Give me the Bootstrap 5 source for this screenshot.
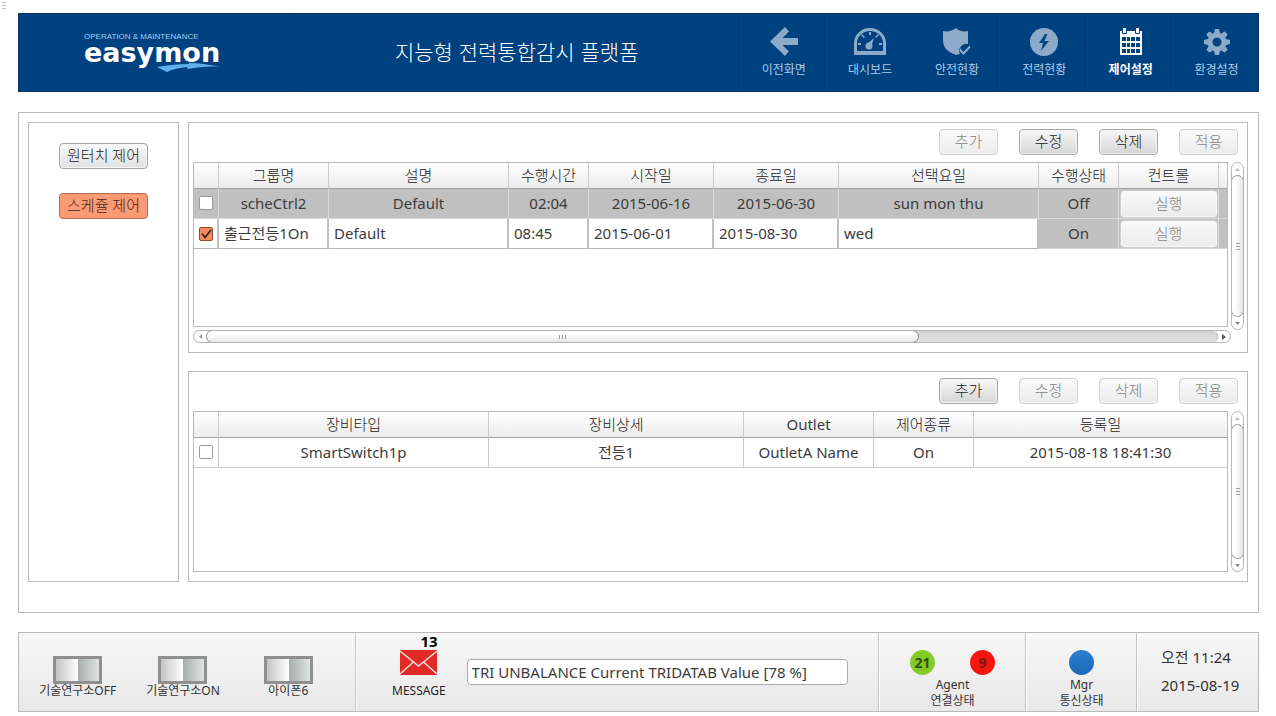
<!DOCTYPE html>
<html lang="ko">
<head>
<meta charset="utf-8">
<meta name="viewport" content="width=device-width, initial-scale=1">
<title>easymon</title>
<link href="https://cdn.jsdelivr.net/npm/bootstrap@5.3.0/dist/css/bootstrap.min.css" rel="stylesheet">
<style>
  :root { --line: #b9b9b9; --ink: #3c3c3c; --navy: #00417f; }
  body { font-family: "Noto Sans", "Noto Sans CJK KR", sans-serif; font-size: 15px; line-height: 20px; color: var(--ink); background: #fff; padding: 13px 17px 4px 18px; position: relative; }
  .grip { left: 2px; top: 2px; width: 4px; height: 7px; background: repeating-linear-gradient(#bbb 0 1px, #fff 1px 3px); }
  .bd { border: 1px solid var(--line); }

  /* header */
  .topbar { display: grid; grid-template-columns: 275fr 446fr 86fr 87fr 87fr 88fr 85fr 87fr; background: var(--navy); min-height: 79px; color: #fff; border: 1px solid #0b3563; }
  .topbar > * + * { border-left: 1px solid #063b75; }
  .topbar > .menu-item { box-shadow: inset 1px 0 #064686; }
  .brand-box { padding: 18px 0 0 65px; }
  .brand-over { font-size: 8px; line-height: 10px; color: #9fd0f5; font-family: "Liberation Sans", sans-serif; }
  .brand-name { font: bold 27px/22px "DejaVu Sans", sans-serif; }
  .brand-swoosh { left: 138px; top: 49px; }
  .page-title { font-size: 21px; line-height: 28px; padding-bottom: 4px; font-weight: 300; font-family: "Noto Sans CJK KR", sans-serif; }
  .menu-item { color: #a9cbea; text-decoration: none; font-size: 12px; line-height: 16px; padding: 12px 0 0 3px; font-family: "Noto Sans CJK KR", sans-serif; }
  .menu-item svg { margin-bottom: 3px; fill: #8eaac9; }
  .menu-item.active { color: #fff; font-weight: 700; }
  .menu-item.active svg { fill: #fff; }

  /* panels */
  .stage { margin-top: 20px; padding: 9px 10px 30px 9px; gap: 9px; min-height: 501px; }
  .side { flex: 0 0 151px; padding-top: 20px; gap: 24px; }
  .pane { padding: 6px 3px 9px 4px; }
  .tools { gap: 21px; padding-right: 6px; margin-bottom: 7px; }
  .btn-ui { height: 26px; min-width: 59px; padding: 0 6px 2px; font-size: 15px; font-weight: 300; line-height: 22px; color: #222; border: 1px solid #a6a6a6; border-radius: 4px; background: linear-gradient(#f7f7f7, #d6d6d6); box-shadow: inset 0 0 0 1px #f6f6f6; }
  .btn-ui:disabled { color: #858585; border-color: #cfcfcf; background: linear-gradient(#fafafa, #ebebeb); opacity: 1; }
  .btn-side { width: 89px; background: linear-gradient(#fafafa, #e0e0e0); }
  .btn-side.active { background: #fd9a76; border-color: #b56d52; box-shadow: none; color: #40251b; }

  .frame { border: 1px solid var(--line); }
  .frame-a { height: 165px; }
  .frame-b { height: 161px; }
  .grid-table { table-layout: fixed; width: 100%; margin: 0; border-collapse: separate; border-spacing: 0; text-align: center; }
  .grid-table th { font-weight: 300; color: #222; height: 26px; padding: 0 0 2px; border-right: 1px solid #cdcdcd; border-bottom: 1px solid #a5a5a5; background: linear-gradient(#fff, #ececec); white-space: nowrap; }
  .grid-table th.latin { font-weight: 400; color: var(--ink); }
  .grid-table td { height: 30px; padding: 0 0 2px; border-right: 1px solid #cdcdcd; border-bottom: 1px solid #cdcdcd; white-space: nowrap; line-height: 20px; vertical-align: middle; }
  .grid-table tr > :last-child { border-right: 0; }
  .grid-table .dim { background: #c0c0c0; border-color: #d9d9d9; }
  .grid-table .ctl, .grid-table .edit { padding: 0; }
  .grid-table .edit { border-right: 2px solid #c0c0c0; border-bottom-color: #b5b5b5; }
  .cell-input { display: block; width: 100%; height: 28px; border: 0; border-radius: 0; padding: 0 5px 2px; font-size: 15px; color: var(--ink); background: #fff; }
  .tick { appearance: none; display: block; margin: 0 auto; width: 14px; height: 14px; border: 1px solid #9b9b9b; border-radius: 2px; background: #fff; }
  .tick:checked { border-color: #8d4b31; background: #f88a5f url("data:image/svg+xml,%3Csvg xmlns='http://www.w3.org/2000/svg' viewBox='0 0 12 12'%3E%3Cpath d='M2 5.5 5 9.5 11 2' fill='none' stroke='%23402a20' stroke-width='1.8'/%3E%3C/svg%3E") center / 12px no-repeat; }
  .btn-run { display: block; width: 98px; max-width: 100%; height: 28px; margin: 0 auto; }

  /* scrollbars */
  .vbar, .hbar { background: #fff; border: 1px solid #b4b4b4; border-radius: 7px; overflow: hidden; color: #888; }
  .vbar { flex: 0 0 13px; margin-left: 3px; }
  .vbar-long { margin-bottom: -3px; }
  .hbar { height: 13px; margin: 3px 13px 0 0; }
  .vbar .thumb { flex: 1; margin: 0 -1px; border: 1px solid #999; border-radius: 7px; background: linear-gradient(90deg, #fff 30%, #e6e6e6); }
  .hbar .thumb { flex: 7 1 0; margin: -1px 0; border: 1px solid #8d8d8d; border-radius: 7px; background: linear-gradient(#fff 30%, #e6e6e6); z-index: 1; }
  .hbar .rest { flex: 3 1 0; background: linear-gradient(#d2d2d2, #e3e3e3); margin-left: -6px; border-right: 1px solid #b4b4b4; border-radius: 0 6px 6px 0; }
  .cap { flex: 0 0 12px; }
  .grains-v { width: 4px; height: 7px; background: repeating-linear-gradient(#999 0 1px, transparent 1px 3px); }
  .grains-h { width: 7px; height: 4px; background: repeating-linear-gradient(90deg, #999 0 1px, transparent 1px 3px); }

  /* status bar */
  .statusbar { display: grid; grid-template-columns: 336fr 523fr 147fr 111fr 122fr; margin-top: 19px; min-height: 80px; background: linear-gradient(#f7f7f7, #e8e8e8); font-size: 12px; line-height: 16px; color: #333; }
  .statusbar > * + * { border-left: 1px solid #c3c3c3; box-shadow: inset 1px 0 #fff; }
  .switches { padding: 23px 14px 0 6px; }
  .switch-btn { border: 0; background: none; padding: 0; font-size: 12px; line-height: 14px; color: #333; }
  .knob { display: block; width: 49px; height: 28px; margin: 0 auto; border: solid #8f8f8f; border-width: 3px; background: linear-gradient(90deg, #c4c4c4, #fff 51%, #a9afae 52%, #dfe4e2); }
  .msg { padding: 0 30px 0 36px; }
  .msg-label { color: #222; }
  .msg-count { right: 8px; top: 0; font: bold 15px/17px "Noto Sans", sans-serif; color: #000; }
  .msg-icon { margin-top: 17px; }
  .msg-field { height: 26px; margin: 0 0 1px 21px; padding: 0 4px; font-size: 15px; line-height: 20px; color: var(--ink); border: 1px solid #aaa; border-radius: 4px; }
  .lamp { width: 25px; height: 25px; border-radius: 50%; font-size: 14px; font-weight: 700; line-height: 25px; text-align: center; }
  .lamp-on { background: radial-gradient(#7cc51d, #8cd02f); color: #2f5011; }
  .lamp-off { background: #f5160f; color: #7d1a12; }
  .lamp-mgr { background: linear-gradient(#2a80cf, #1b69b8); }
  .status-cell { padding: 17px 0 0 1px; }
  .lamps { gap: 35px; margin-bottom: 2px; }
  .clock { padding: 0 0 2px 24px; font-size: 15px; gap: 8px; line-height: 20px; }
</style>
</head>
<body>
<div class="grip position-absolute"></div>

<header class="topbar">
  <div class="brand-box position-relative">
    <div class="brand-over">OPERATION &amp; MAINTENANCE</div>
    <div class="brand-name">easymon</div>
    <svg class="brand-swoosh position-absolute" width="64" height="9" viewBox="0 0 64 9"><path fill="#5fb2ee" d="M0 4C12 2 22 1 32 1l0-1C42 0 54 2 64 4 52 3 42 4 31 6l-1-2C22 5 16 6 10 9Z"/></svg>
  </div>
  <h1 class="page-title m-0 d-flex align-items-center justify-content-center">지능형 전력통합감시 플랫폼</h1>
  <a class="menu-item d-flex flex-column align-items-center" href="#"><svg width="34" height="32" viewBox="0 0 34 32"><path d="M18 1 3 15.500 18 30l4-4.500-6.500-6.500H31v-7H15.500L22 5.500Z"/></svg>이전화면</a>
  <a class="menu-item d-flex flex-column align-items-center" href="#"><svg width="34" height="32" viewBox="0 0 34 32"><path fill-rule="evenodd" d="M1 29V17a16 15 0 0 1 32 0v12ZM4 25h26v-8a13 12 0 0 0-26 0Z"/><circle cx="16" cy="20" r="3.500"/><path d="m14 18 7-6-2.500 8ZM16 6h2v3h-2ZM5 17h3v2H5ZM26 17h3v2h-3ZM9 8l3 3-1 1-3-3ZM25 8l-3 3 1 1 3-3Z"/></svg>대시보드</a>
  <a class="menu-item d-flex flex-column align-items-center" href="#"><svg width="34" height="32" viewBox="0 0 34 32"><path d="M16 2c3 3 7 4 12 3v13a7 7 0 0 0-8 10l-4 1C8 26 3 22 3 14V5c5 1 9 0 13-3Z"/><path d="m20 22 3.500 4 6-6.500 1 2-7 7.500-4-4Z"/></svg>안전현황</a>
  <a class="menu-item d-flex flex-column align-items-center" href="#"><svg width="34" height="32" viewBox="0 0 34 32"><circle cx="17" cy="16" r="14"/><path fill="#0a4684" d="m18 8-6 9h4l-2 8 8-10h-4.500l3-7Z"/></svg>전력현황</a>
  <a class="menu-item active d-flex flex-column align-items-center" href="#" aria-current="page"><svg width="34" height="32" viewBox="0 0 34 32"><path fill-rule="evenodd" d="M6 5h22v24H6ZM8 11v4h4v-4ZM13 11v4h3v-4ZM17 11v4h4v-4ZM22 11v4h4v-4ZM8 17v4h4v-4ZM13 17v4h3v-4ZM17 17v4h4v-4ZM22 17v4h4v-4ZM8 23v4h4v-4ZM13 23v4h3v-4ZM17 23v4h4v-4ZM22 23v4h4v-4Z"/><path stroke="#00417f" d="M8.500 1.500h4v6h-4ZM21.500 1.500h4v6h-4Z"/></svg>제어설정</a>
  <a class="menu-item d-flex flex-column align-items-center" href="#"><svg width="34" height="32" viewBox="0 0 34 32"><g transform="translate(17 16)"><circle r="7" fill="none" stroke="#8eaac9" stroke-width="5"/><path d="M-3-9l1-4h4l1 4ZM-3 9l1 4h4l1-4ZM-9-3l-4 1v4l4 1ZM9-3l4 1v4L9 3Z"/><path transform="rotate(45)" d="M-3-9l1-4h4l1 4ZM-3 9l1 4h4l1-4ZM-9-3l-4 1v4l4 1ZM9-3l4 1v4L9 3Z"/></g></svg>환경설정</a>
</header>

<main class="stage bd d-flex">
  <nav class="side bd d-flex flex-column align-items-center">
    <button type="button" class="btn btn-ui btn-side">원터치 제어</button>
    <button type="button" class="btn btn-ui btn-side active">스케쥴 제어</button>
  </nav>
  <div class="flex-grow-1 d-flex flex-column">
    <section class="pane bd">
      <div class="tools d-flex justify-content-end">
        <button type="button" class="btn btn-ui" disabled>추가</button>
        <button type="button" class="btn btn-ui">수정</button>
        <button type="button" class="btn btn-ui">삭제</button>
        <button type="button" class="btn btn-ui" disabled>적용</button>
      </div>
      <div class="d-flex align-items-stretch">
        <div class="frame frame-a flex-grow-1">
          <table class="grid-table">
            <colgroup><col style="width:25px"><col style="width:110px"><col style="width:180px"><col style="width:80px"><col style="width:125px"><col style="width:125px"><col style="width:200px"><col style="width:80px"><col style="width:100px"><col style="width:8px"></colgroup>
            <thead><tr><th></th><th>그룹명</th><th>설명</th><th>수행시간</th><th>시작일</th><th>종료일</th><th>선택요일</th><th>수행상태</th><th>컨트롤</th><th></th></tr></thead>
            <tbody>
              <tr><td class="dim"><input type="checkbox" class="tick" aria-label="scheCtrl2"></td><td class="dim">scheCtrl2</td><td class="dim">Default</td><td class="dim">02:04</td><td class="dim">2015-06-16</td><td class="dim">2015-06-30</td><td class="dim">sun mon thu</td><td class="dim">Off</td><td class="dim ctl"><button type="button" class="btn btn-ui btn-run" disabled>실행</button></td><td class="dim"></td></tr>
              <tr><td class="edit"><input type="checkbox" class="tick" checked aria-label="출근전등1On"></td><td class="edit"><input class="cell-input" value="출근전등1On" aria-label="그룹명"></td><td class="edit"><input class="cell-input" value="Default" aria-label="설명"></td><td class="edit"><input class="cell-input" value="08:45" aria-label="수행시간"></td><td class="edit"><input class="cell-input" value="2015-06-01" aria-label="시작일"></td><td class="edit"><input class="cell-input" value="2015-08-30" aria-label="종료일"></td><td class="edit"><input class="cell-input" value="wed" aria-label="선택요일"></td><td class="dim">On</td><td class="dim ctl"><button type="button" class="btn btn-ui btn-run" disabled>실행</button></td><td class="dim"></td></tr>
            </tbody>
          </table>
        </div>
        <div class="vbar vbar-long d-flex flex-column">
          <div class="cap d-flex align-items-center justify-content-center"><svg width="5" height="3"><path fill="#bbb" d="M0 3h5L2.500 0Z"/></svg></div>
          <div class="thumb d-flex align-items-center justify-content-center"><div class="grains-v"></div></div>
          <div class="cap d-flex align-items-center justify-content-center"><svg width="5" height="3"><path fill="#888" d="M0 0h5L2.500 3Z"/></svg></div>
        </div>
      </div>
      <div class="hbar d-flex">
        <div class="cap d-flex align-items-center justify-content-center"><svg width="3" height="5"><path fill="#999" d="M3 0v5L0 2.500Z"/></svg></div>
        <div class="thumb d-flex align-items-center justify-content-center"><div class="grains-h"></div></div>
        <div class="rest"></div>
        <div class="cap d-flex align-items-center justify-content-center"><svg width="4" height="6"><path fill="#555" d="M0 0v6l4-3Z"/></svg></div>
      </div>
    </section>

    <section class="pane bd mt-auto">
      <div class="tools d-flex justify-content-end">
        <button type="button" class="btn btn-ui">추가</button>
        <button type="button" class="btn btn-ui" disabled>수정</button>
        <button type="button" class="btn btn-ui" disabled>삭제</button>
        <button type="button" class="btn btn-ui" disabled>적용</button>
      </div>
      <div class="d-flex align-items-stretch">
        <div class="frame frame-b flex-grow-1">
          <table class="grid-table">
            <colgroup><col style="width:25px"><col style="width:270px"><col style="width:255px"><col style="width:130px"><col style="width:100px"><col style="width:253px"></colgroup>
            <thead><tr><th></th><th>장비타입</th><th>장비상세</th><th class="latin">Outlet</th><th>제어종류</th><th>등록일</th></tr></thead>
            <tbody><tr><td><input type="checkbox" class="tick" aria-label="SmartSwitch1p"></td><td>SmartSwitch1p</td><td>전등1</td><td>OutletA Name</td><td>On</td><td>2015-08-18 18:41:30</td></tr></tbody>
          </table>
        </div>
        <div class="vbar d-flex flex-column">
          <div class="cap d-flex align-items-center justify-content-center"><svg width="5" height="3"><path fill="#bbb" d="M0 3h5L2.500 0Z"/></svg></div>
          <div class="thumb d-flex align-items-center justify-content-center"><div class="grains-v"></div></div>
          <div class="cap d-flex align-items-center justify-content-center"><svg width="5" height="3"><path fill="#888" d="M0 0h5L2.500 3Z"/></svg></div>
        </div>
      </div>
    </section>
  </div>
</main>

<footer class="statusbar bd">
  <div class="switches row row-cols-3 g-0 align-items-start">
    <button type="button" class="col switch-btn"><span class="knob"></span>기술연구소OFF</button>
    <button type="button" class="col switch-btn"><span class="knob"></span>기술연구소ON</button>
    <button type="button" class="col switch-btn"><span class="knob"></span>아이폰6</button>
  </div>
  <div class="msg d-flex align-items-center">
    <div class="position-relative text-center align-self-start">
      <span class="msg-count position-absolute">13</span>
      <svg class="msg-icon d-block mx-auto" width="37" height="25" viewBox="0 0 37 25"><path fill="#e12a25" d="M0 0h37v25H0Z"/><path d="m0 1 18.500 15L37 1M0 24l13.500-12M37 24 23.500 12" fill="none" stroke="#ffd9d0" stroke-width="1.500"/></svg>
      <label class="msg-label d-block mt-2" for="msg">MESSAGE</label>
    </div>
    <input id="msg" class="msg-field flex-grow-1" value="TRI UNBALANCE Current TRIDATAB Value [78 %]" readonly>
  </div>
  <div class="status-cell d-flex flex-column align-items-center">
    <div class="lamps d-flex"><div class="lamp lamp-on">21</div><div class="lamp lamp-off">9</div></div>
    <div>Agent</div><div>연결상태</div>
  </div>
  <div class="status-cell d-flex flex-column align-items-center">
    <div class="lamps d-flex"><div class="lamp lamp-mgr"></div></div>
    <div>Mgr</div><div>통신상태</div>
  </div>
  <div class="clock d-flex flex-column justify-content-center"><div>오전 11:24</div><div>2015-08-19</div></div>
</footer>
<script src="https://cdn.jsdelivr.net/npm/bootstrap@5.3.0/dist/js/bootstrap.bundle.min.js"></script>
</body>
</html>
